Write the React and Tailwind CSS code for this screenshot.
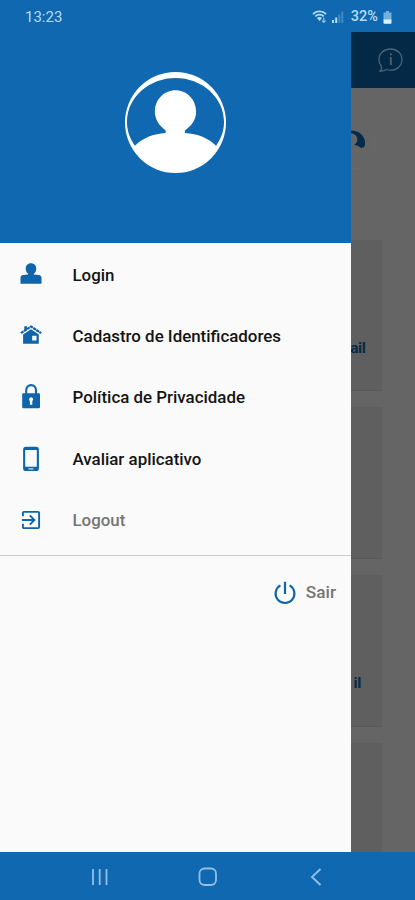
const BLUE = '#1064aa';

function UserIcon() {
  return (
    <svg className="-mt-1" width="22" height="22" viewBox="0 0 22 22" fill={BLUE}>
      <path d="M11 .3c3.200 0 5.300 2.300 5.300 5.200 0 2.400-1.100 4.400-2.500 5.300v.7l5 .5c1.800.3 2.700 1.300 2.700 3.100v5.700H.5v-5.700c0-1.800.9-2.800 2.700-3.100l5-.5v-.7C6.800 9.900 5.700 7.900 5.700 5.500 5.700 2.600 7.800.3 11 .3z" />
    </svg>
  );
}

function HouseIcon() {
  return (
    <svg className="-mt-1" width="22" height="22" viewBox="0 0 22 22" fill={BLUE}>
      <path d="M4.300 2.200h2.800v3.300l-2.800 2z" />
      <path d="M.9 9.200 11 2.500l10.200 6.700" fill="none" stroke={BLUE} strokeWidth="2.200" strokeDasharray="3.200 .5" />
      <path fillRule="evenodd" d="M11 5.200l7.800 5.200v9.400H3.100v-9.400zM12.200 11.800v4.800h4.300v-4.800z" />
    </svg>
  );
}

function LockIcon() {
  return (
    <svg className="-mt-1" width="20" height="26" viewBox="0 0 20 26">
      <path d="M5.200 11V7a4.900 4.900 0 0 1 9.800 0v4" fill="none" stroke={BLUE} strokeWidth="2.100" />
      <rect x="1.200" y="10.200" width="17.800" height="15" rx="1.300" fill={BLUE} />
      <path d="M10.100 14.300a2.100 2.100 0 0 1 1.200 3.800v3.700H8.900v-3.700a2.100 2.100 0 0 1 1.200-3.800z" fill="#fafafa" />
    </svg>
  );
}

function PhoneIcon() {
  return (
    <svg className="-mt-px" width="18" height="26" viewBox="0 0 18 26">
      <path fillRule="evenodd" fill={BLUE} d="M4 .8h10a2.900 2.900 0 0 1 2.900 2.900v18.500a2.900 2.900 0 0 1-2.900 2.900H4a2.900 2.900 0 0 1-2.900-2.900V3.700A2.900 2.900 0 0 1 4 .8zM3.200 4v16.800h11.600V4z" />
      <path d="M6.600 22.900h4.800" stroke="#d5e5f2" strokeWidth="1.200" />
    </svg>
  );
}

function LogoutIcon() {
  return (
    <svg className="-mt-px" width="20" height="20" viewBox="0 0 20 20" fill="none" stroke={BLUE} strokeWidth="1.900">
      <path d="M1.900 6.300V2.900c0-.6.400-1 1-1h14.200c.6 0 1 .4 1 1v14.200c0 .6-.4 1-1 1H2.900c-.6 0-1-.4-1-1v-3.400M1 10h11.500M8.800 5.400l4.600 4.600-4.600 4.600" />
    </svg>
  );
}

function PowerIcon() {
  return (
    <svg width="24" height="26" viewBox="0 0 24 26" fill="none" stroke={BLUE} strokeWidth="2.200">
      <path d="M7.400 5.400a9.400 9.400 0 1 0 9.200 0M12 1.800v12.200" />
    </svg>
  );
}

function Avatar() {
  return (
    <svg width="101" height="101" viewBox="0 0 102 102">
      <circle cx="51" cy="51" r="51" fill="#fff" />
      <path fill="#1068b0" d="M10 74.500C5 67.500 2 59 2 50.500 2 25 25 6 51 6s49 19 49 44.500c0 8.500-3 17-8 24C85 67 73 62 60.500 61.500v-2.500C67.500 54.500 71.800 48 71.800 40 71.800 28 62.500 18.500 51 18.500S30.200 28 30.200 40c0 8 4.300 14.500 10.800 19v2.500C29 62 17 67 10 74.500z" />
    </svg>
  );
}

const ITEMS = [
  { label: 'Login', Icon: UserIcon, color: 'text-[#141414]' },
  { label: 'Cadastro de Identificadores', Icon: HouseIcon, color: 'text-[#141414]' },
  { label: 'Política de Privacidade', Icon: LockIcon, color: 'text-[#141414]' },
  { label: 'Avaliar aplicativo', Icon: PhoneIcon, color: 'text-[#141414]' },
  { label: 'Logout', Icon: LogoutIcon, color: 'text-[#757575]' },
];

function StatusBar() {
  return (
    <header className="flex h-8 shrink-0 items-center justify-between bg-[#1068b0] pt-0.5 pr-[23px] pl-[25px] text-[#b4dcf6]">
      <span className="text-[15px]">13:23</span>
      <div className="flex items-center">
        <svg width="32" height="16" viewBox="0 0 32 16">
          <g fill="none" stroke="#b4dcf6" strokeWidth="1.800">
            <path d="M1 5.200C4.500 1.500 10.500 1.500 14 5.200M3.300 7.400c2.300-2.300 6.100-2.300 8.400 0" />
          </g>
          <path d="M4.800 9c1.500-1.400 3.800-1.400 5.200 0L7.600 12z" fill="#b4dcf6" />
          <path d="M11.800 8.500v5M10 11.700l1.800 1.800 1.800-1.800" fill="none" stroke="#8fc3e8" strokeWidth="1.200" />
          <path d="M20 11h2v3h-2zM23.200 8.500h2V14h-2z" fill="#b4dcf6" />
          <path d="M26.300 5.500h2V14h-2zM29.300 2.500h2V14h-2z" fill="#3f89c4" />
        </svg>
        <span className="ml-[7px] text-[14.500px] font-medium">32%</span>
        <svg className="ml-[5px]" width="9" height="13" viewBox="0 0 8 13">
          <path d="M2.500 0h3v1.500H8V9H0V1.500h2.500z" fill="#74b0dc" />
          <path d="M0 8.500h8V12a.8.8 0 0 1-.8.8H.8A.8.8 0 0 1 0 12z" fill="#dcf3ff" />
        </svg>
      </div>
    </header>
  );
}

function Drawer() {
  return (
    <aside className="flex w-[351px] shrink-0 flex-col bg-[#fafafa]">
      <div className="flex h-[211px] shrink-0 justify-center bg-[#1068b0] pt-[40px]">
        <Avatar />
      </div>
      <nav className="flex h-[313px] shrink-0 flex-col border-b border-[#cecece] pt-[2px] pb-[4px]">
        {ITEMS.map(({ label, Icon, color }) => (
          <div key={label} className={`flex flex-1 items-center text-[16.900px] font-medium ${color}`}>
            <span className="flex w-[62px] justify-center">
              <Icon />
            </span>
            <span className="ml-[10.500px] whitespace-nowrap">{label}</span>
          </div>
        ))}
      </nav>
      <div className="flex h-[74px] items-center justify-end gap-[9px] pr-[15px] text-[17.200px] font-medium text-[#757575]">
        <PowerIcon />
        <span>Sair</span>
      </div>
    </aside>
  );
}

function Card({ label, className }) {
  return (
    <div className={`flex w-[31px] shrink-0 justify-end border-b border-[#575757] bg-[#5f5f5f] text-[15.500px] font-bold tracking-tight whitespace-nowrap text-[#042a47] ${className}`}>
      {label}
    </div>
  );
}

function DimmedPage() {
  return (
    <main className="flex min-w-0 flex-1 flex-col overflow-hidden bg-[#656565]">
      <div className="flex h-14 shrink-0 items-center bg-[#032946] pl-[26px]">
        <svg width="28" height="28" viewBox="0 0 28 28" fill="none" stroke="#4b6478" strokeWidth="1.300">
          <path d="M4.200 20.200C2.600 18 1.900 16 1.900 13.600 1.900 7.500 7 3 13.500 3S25 7.500 25 13.600s-5 10.600-11.500 10.600c-1.500 0-2.800-.2-4.100-.7-1.700 1.300-4 1.800-6.400 1.500 1.600-1.400 2-3 1.200-4.800z" />
          <path d="M13.800 11v8M13.800 7.300v2" strokeWidth="1.800" />
        </svg>
      </div>
      <div className="flex h-[152px] shrink-0 pt-[33px]">
        <div className="h-[48px] w-[24px] rounded-r-2xl border-r border-b border-[#686868] pt-[8px]">
          <svg width="15" height="22" viewBox="0 0 15 22" fill="#042b4b">
            <path d="M0 1.500c7 0 12.500 4 13.800 10 .5 2.500.2 4.800-1 7.300l-.8-.8-1.500 1.300c-2.300-2-4.500-3-7.500-3.200 3-2 4-4.600 3.200-7.100C5.200 6 3 4.400 0 4.200z" />
          </svg>
        </div>
      </div>
      <div className="flex flex-col gap-4">
        <Card className="h-[151px] pt-[97px] pr-[16.500px]" label="ail" />
        <Card className="h-[152px]" />
        <Card className="h-[152px] pt-[97px] pr-[21px]" label="il" />
        <Card className="h-[111px]" />
      </div>
    </main>
  );
}

function NavigationBar() {
  return (
    <footer className="flex h-12 shrink-0 items-center bg-[#1068b0] pt-0.5 pl-[90px]">
      <svg width="20" height="20" viewBox="0 0 20 20" stroke="#8fc0e8" strokeWidth="1.800">
        <path d="M3 2v16M9.700 2v16M16.500 2v16" />
      </svg>
      <svg className="ml-[88px]" width="20" height="20" viewBox="0 0 20 20" fill="none" stroke="#8fc0e8" strokeWidth="1.800">
        <rect x="1.500" y="1.500" width="16.500" height="16.500" rx="5" />
      </svg>
      <svg className="ml-[91px]" width="14" height="20" viewBox="0 0 14 20" fill="none" stroke="#8fc0e8" strokeWidth="1.900">
        <path d="M11.500 2 3 10l8.500 8" />
      </svg>
    </footer>
  );
}

export default function App() {
  return (
    <div className="flex h-[900px] w-[415px] flex-col overflow-hidden bg-[#1068b0] font-[Roboto,sans-serif]">
      <StatusBar />
      <div className="flex h-[820px] shrink-0">
        <Drawer />
        <DimmedPage />
      </div>
      <NavigationBar />
    </div>
  );
}
